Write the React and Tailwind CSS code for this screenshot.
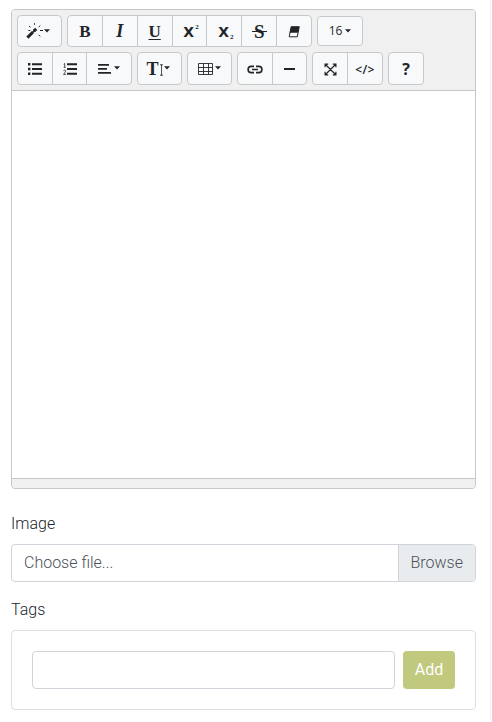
import React from "react";

function Group({ className = "", children }) {
  return (
    <div className={`flex shrink-0 divide-x divide-[#c6c8ca] overflow-hidden rounded-[4px] border border-[#c6c8ca] bg-[#f8f9fa] ${className}`}>
      {children}
    </div>
  );
}

function Btn({ className = "", label, children }) {
  return (
    <button type="button" aria-label={label} className={`flex min-w-0 flex-1 items-center justify-center text-[#212529] ${className}`}>
      {children}
    </button>
  );
}

function Caret({ className = "" }) {
  return (
    <svg width="6" height="4" viewBox="0 0 6 4" className={`shrink-0 ${className}`}>
      <path d="M0 0.3h6L3 3.6z" fill="currentColor" />
    </svg>
  );
}

const serif = "font-['Liberation_Serif',serif] font-bold text-[17px] leading-none";
const cross = "font-['DejaVu_Sans',sans-serif] text-[14px] font-bold leading-none";
const script = "font-['Liberation_Serif',serif] text-[7px] font-bold leading-none";

function Wand() {
  return (
    <svg width="18" height="18" viewBox="0 0 18 18" className="shrink-0" fill="none" stroke="currentColor">
      <path d="M1.4 15.6 7 10" strokeWidth="3" />
      <path d="M6.8 10.2l1.4-1.4" strokeWidth="1.8" />
      <path d="M7.8 9.2l2.4-2.4" strokeWidth="3.2" />
      <path d="M3 4l1.5 1.3M8.5 1.2v1.6M14.3 3.6l-1.6 1.5M14 8.5h3M12.6 12.8l1.6 1.6M2.4 8.5h2" strokeWidth="1" />
    </svg>
  );
}

function UnorderedList() {
  return (
    <svg width="14" height="12" viewBox="0 0 14 12" fill="currentColor">
      <path d="M0 0h2.4v2.4H0zM4 .2h10v2H4zM0 4.8h2.4v2.4H0zM4 5h10v2H4zM0 9.6h2.4V12H0zM4 9.8h10v2H4z" />
    </svg>
  );
}

function OrderedList() {
  return (
    <svg width="14" height="12" viewBox="0 0 14 12" fill="currentColor" className="ml-px">
      <path d="M4 .2h10v2H4zM4 5h10v2H4zM4 9.8h10v2H4z" />
      <path d="M.7 1.2 1.7.5v3.8M.7 4.3h2M.5 7.9c.4-1.3 2.3-1.1 2.1.2C2.4 9.3 1.4 10 .6 11.4H3" fill="none" stroke="currentColor" strokeWidth=".8" />
    </svg>
  );
}

function AlignLeft() {
  return (
    <svg width="13" height="10" viewBox="0 0 13 10" fill="currentColor">
      <path d="M0 0h11v1.7H0zM0 4h9v1.7H0zM0 8h13v1.7H0z" />
    </svg>
  );
}

function TableIcon() {
  return (
    <svg width="15" height="13" viewBox="0 0 15 13" fill="none" stroke="currentColor" strokeWidth=".9" className="mt-px">
      <path d="M.5 .5h14v11H.5zM5.5 .5v11M10.5 .5v11M.5 4.5h14M.5 8.5h14" />
    </svg>
  );
}

function LinkIcon() {
  return (
    <svg width="16" height="10" viewBox="0 0 16 10" fill="none" stroke="currentColor" strokeWidth="1.6">
      <path d="M7 8.6H4.2a3.1 3.1 0 0 1 0-6.2H7M9 2.4h2.8a3.1 3.1 0 0 1 0 6.2H9M5 5.5h6" />
    </svg>
  );
}

function Eraser() {
  return (
    <svg width="12" height="12" viewBox="0 0 12 12" className="mt-px">
      <path d="M3.2 .8h8L9.3 10.8H1.2z" fill="#fff" stroke="currentColor" strokeLinejoin="round" />
      <path d="M3.2 .6h8.2L10 6.8H1.6z" fill="currentColor" />
    </svg>
  );
}

function Fullscreen() {
  return (
    <svg width="13" height="13" viewBox="0 0 13 13" fill="none" stroke="currentColor" strokeWidth="1.2" className="mt-px">
      <path d="M1.5 1.5l10 10M11.5 1.5l-10 10M1.1 4.2V1.1h3.1M8.8 1.1h3.1v3.1M1.1 8.8v3.1h3.1M8.8 11.9h3.1V8.8" />
    </svg>
  );
}

export default function App() {
  return (
    <div className="flex h-[722px] w-[492px] bg-white font-[Roboto,sans-serif]">
      <main className="flex w-[491px] flex-col border-r border-[#f2f2f2] pl-[11px] pr-[14px] pt-[9px] text-[16px] font-light leading-6 text-[#212529]">
        <section className="flex h-[480px] shrink-0 flex-col overflow-hidden rounded-[4px] border border-[#c6c6c6]">
          <div className="flex h-[81px] shrink-0 flex-col gap-[5px] border-b border-[#c6c6c6] bg-[#f0f0f0] pl-[5px] pt-[5px]">
            <div className="flex h-8 items-center gap-[5px]">
              <Group className="h-8 w-[45px]">
                <Btn label="Style"><Wand /><Caret className="mr-[3px]" /></Btn>
              </Group>
              <Group className="h-8 w-[245px]">
                <Btn><span className={serif}>B</span></Btn>
                <Btn><span className={`${serif} text-[18px] italic`}>I</span></Btn>
                <Btn><span className={`${serif} underline decoration-1 underline-offset-2`}>U</span></Btn>
                <Btn className="gap-px"><span className={`${cross} ml-[3px] mt-0.5`}>X</span><span className={`${script} mb-2`}>2</span></Btn>
                <Btn className="gap-px"><span className={`${cross} ml-[3px] mt-0.5`}>X</span><span className={`${script} mt-3`}>2</span></Btn>
                <Btn><span className="relative font-['Liberation_Serif',serif] text-[19px] font-bold leading-none">S<i className="absolute -left-0.5 -right-0.5 top-[9px] h-[1.5px] bg-current" /></span></Btn>
                <Btn label="Clear"><Eraser /></Btn>
              </Group>
              <Group className="h-[30px] w-[46px]">
                <Btn className="gap-[3px] font-['Open_Sans',sans-serif] text-[12px] font-normal"><span>16</span><Caret /></Btn>
              </Group>
            </div>
            <div className="flex h-[33px] gap-[5px]">
              <Group className="w-[115px]">
                <Btn label="Unordered list"><UnorderedList /></Btn>
                <Btn label="Ordered list"><OrderedList /></Btn>
                <Btn label="Paragraph" className="w-11 flex-none gap-[3px]"><AlignLeft /><Caret className="mb-px" /></Btn>
              </Group>
              <Group className="w-[45px]">
                <Btn>
                  <span className={`${serif} mt-px text-[18px]`}>T</span>
                  <svg width="5" height="12" viewBox="0 0 5 12" fill="none" stroke="currentColor" strokeWidth=".8" className="mt-0.5 shrink-0"><path d="M1 .8h3M2.5 .5v11M1 11.2h3" /></svg>
                  <Caret className="mb-px mr-[3px]" />
                </Btn>
              </Group>
              <Group className="w-[45px]">
                <Btn label="Table" className="gap-[2px]"><TableIcon /><Caret className="mb-px mr-px" /></Btn>
              </Group>
              <Group className="w-[70px]">
                <Btn label="Link"><LinkIcon /></Btn>
                <Btn label="Line"><span className="mt-px h-[2px] w-[11px] bg-current" /></Btn>
              </Group>
              <Group className="w-[71px]">
                <Btn label="Full screen"><Fullscreen /></Btn>
                <Btn><span className="mt-0.5 font-['Open_Sans',sans-serif] text-[12px] font-semibold leading-none tracking-[0.3px]">&lt;/&gt;</span></Btn>
              </Group>
              <Group className="w-9">
                <Btn><span className="mt-px font-['Open_Sans',sans-serif] text-[16px] font-bold leading-none">?</span></Btn>
              </Group>
            </div>
          </div>
          <div className="flex-1 bg-white" />
          <div className="h-[10px] shrink-0 border-t border-[#c6c6c6] bg-[#f0f0f0]" />
        </section>

        <label className="mt-[23px]">Image</label>
        <div className="mt-2 flex h-[38px] shrink-0 overflow-hidden rounded-[4px] border border-[#ced4da] text-[#495057]">
          <span className="flex-1 pl-3 leading-[36px]">Choose file...</span>
          <span className="w-[77px] border-l border-[#ced4da] bg-[#e9ecef] pl-[11.5px] leading-[36px]">Browse</span>
        </div>

        <label className="mt-4">Tags</label>
        <div className="mt-2 flex h-20 shrink-0 gap-2 rounded-[4px] border border-[#dfdfdf] p-5">
          <input className="h-[38px] min-w-0 flex-1 rounded-[4px] border border-[#ced4da] px-3 outline-none" />
          <button type="button" className="h-[38px] w-[52px] rounded-[4px] bg-[#c0c97e] font-normal text-white">Add</button>
        </div>
      </main>
    </div>
  );
}
